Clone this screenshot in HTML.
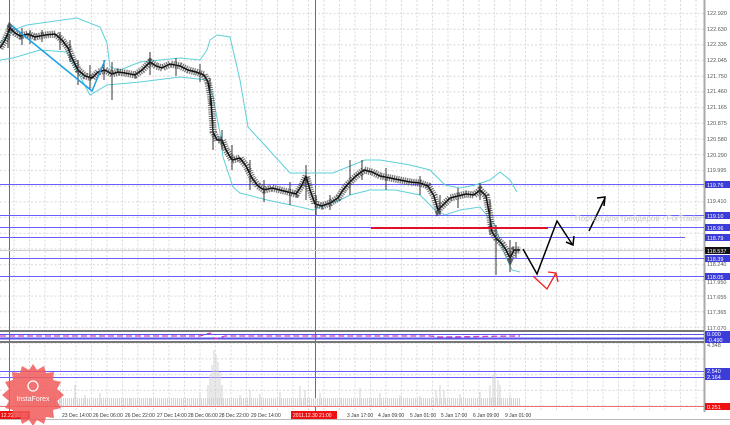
<!DOCTYPE html>
<html><head><meta charset="utf-8"><style>
html,body{margin:0;padding:0;background:#fff;width:730px;height:425px;overflow:hidden}
svg{display:block;font-family:"Liberation Sans",sans-serif}
</style></head><body>
<svg width="730" height="425" viewBox="0 0 730 425" xmlns="http://www.w3.org/2000/svg">
<defs>
<pattern id="g" x="0" y="0" width="15.5" height="15.7" patternUnits="userSpaceOnUse">
<path d="M0 13.5H15.5M14 0V15.7" stroke="#d8d8d8" stroke-width="1" stroke-dasharray="2,2" fill="none"/>
</pattern>
</defs>
<rect x="0" y="0" width="704" height="410" fill="url(#g)"/>
<line x1="704.5" y1="0" x2="704.5" y2="412" stroke="#aaa" stroke-width="2"/>
<g font-size="5.5" fill="#555">
<text x="707" y="15">122.920</text><text x="707" y="31">122.630</text><text x="707" y="46">122.335</text>
<text x="707" y="62">122.045</text><text x="707" y="78">121.750</text><text x="707" y="93">121.460</text>
<text x="707" y="109">121.165</text><text x="707" y="125">120.875</text><text x="707" y="141">120.580</text>
<text x="707" y="157">120.290</text><text x="707" y="172">119.995</text><text x="707" y="203">119.410</text>
<text x="707" y="266">118.240</text><text x="707" y="284">117.950</text><text x="707" y="299">117.655</text>
<text x="707" y="314">117.365</text><text x="707" y="330">117.070</text><text x="707" y="347">4.348</text>
</g>
<rect x="9" y="0" width="1" height="412" fill="#ff3030"/>
<rect x="315" y="0" width="1" height="412" fill="#ff3030"/>
<g stroke="#6a5cff" stroke-width="1">
<line x1="0" y1="184.5" x2="704" y2="184.5"/>
<line x1="0" y1="215.5" x2="704" y2="215.5"/>
<line x1="0" y1="227.5" x2="704" y2="227.5"/>
<line x1="0" y1="237.5" x2="685" y2="237.5"/>
<line x1="0" y1="258.5" x2="704" y2="258.5"/>
<line x1="0" y1="276.5" x2="704" y2="276.5"/>
<line x1="0" y1="371.5" x2="704" y2="371.5"/>
<line x1="0" y1="377.5" x2="704" y2="377.5"/>
</g>
<line x1="0" y1="250.5" x2="704" y2="250.5" stroke="#ccc"/>
<g fill="none" stroke="#5fd0d8" stroke-width="1">
<path d="M0 43 L13 30 L27 25 L77 18 L100 27 L107 43 L110 67 L120 70 L140 62 L160 60 L180 58 L200 60 L207 50 L210 40 L217 35 L230 37 L240 80 L248 127 L260 140 L290 173 L333 173 L365 160 L380 160 L410 165 L430 170 L445 185 L460 188 L475 185 L490 180 L500 172 L510 180 L517 192"/>
<path d="M0 60 L13 58 L40 50 L67 52 L90 95 L107 85 L140 82 L180 77 L207 80 L213 97 L220 133 L223 157 L233 187 L240 193 L267 200 L300 207 L313 210 L325 205 L340 200 L350 195 L370 190 L395 190 L420 195 L435 210 L445 215 L460 210 L480 207 L495 225 L505 255 L512 270 L520 272"/>
</g>
<path id="pr" d="M0 48 L5 40 L10 28 L15 33 L20 36 L28 34 L35 37 L45 35 L55 34 L62 40 L68 48 L72 58 L78 70 L85 76 L92 78 L98 72 L105 70 L112 74 L118 72 L125 73 L135 75 L142 70 L150 62 L156 66 L162 68 L170 64 L180 66 L188 70 L196 72 L204 75 L208 82 L211 100 L213 132 L217 140 L222 140 L226 150 L232 160 L240 158 L246 166 L252 178 L258 186 L264 190 L272 188 L280 190 L288 192 L296 194 L302 185 L306 176 L310 190 L315 204 L322 206 L330 203 L338 198 L343 190 L348 184 L356 176 L364 170 L372 172 L380 176 L390 178 L400 180 L410 182 L420 183 L428 186 L434 196 L438 210 L444 204 L450 198 L458 196 L466 194 L474 195 L480 190 L486 196 L489 212 L492 232 L496 238 L502 244 L506 250 L510 258 L514 250 L520 250" fill="none" stroke="#333" stroke-width="7" stroke-dasharray="1 1.2" opacity="0.55"/>
<use href="#pr" stroke-width="4" stroke-dasharray="1 0.8" opacity="0.8" transform="translate(0.5,0)"/>
<path d="M0 48 L5 40 L10 28 L15 33 L20 36 L28 34 L35 37 L45 35 L55 34 L62 40 L68 48 L72 58 L78 70 L85 76 L92 78 L98 72 L105 70 L112 74 L118 72 L125 73 L135 75 L142 70 L150 62 L156 66 L162 68 L170 64 L180 66 L188 70 L196 72 L204 75 L208 82 L211 100 L213 132 L217 140 L222 140 L226 150 L232 160 L240 158 L246 166 L252 178 L258 186 L264 190 L272 188 L280 190 L288 192 L296 194 L302 185 L306 176 L310 190 L315 204 L322 206 L330 203 L338 198 L343 190 L348 184 L356 176 L364 170 L372 172 L380 176 L390 178 L400 180 L410 182 L420 183 L428 186 L434 196 L438 210 L444 204 L450 198 L458 196 L466 194 L474 195 L480 190 L486 196 L489 212 L492 232 L496 238 L502 244 L506 250 L510 258 L514 250 L520 250" fill="none" stroke="#111" stroke-width="1.5"/>
<g stroke="#333" stroke-width="1">
<path d="M8 25V48M22 28V45M30 30V44M42 30V42M60 32V50M70 40V62M78 60V85M90 65V90M104 60V80M112 62V100M150 52V75M176 58V76M200 64V82M210 78V105M213 120V150M222 130V150M232 145V170M250 160V190M264 180V202M290 182V205M306 165V200M316 195V215M330 195V210M350 160V195M362 160V180M386 168V190M420 176V195M440 195V215M458 188V208M480 183V200M490 200V235M496 225V275M510 240V272M516 242V258"/>
</g>
<path d="M11 25 L92 91 L105 60" fill="none" stroke="#1ea0e6" stroke-width="1.5"/>
<line x1="371" y1="228" x2="548" y2="228" stroke="#e0102a" stroke-width="2"/>
<g fill="none" stroke="#000" stroke-width="1.5">
<path d="M523 249 L537 274 L557 221 L572 244"/>
<path d="M566 242 L573 245 L574 236"/>
<path d="M589 231 L605 198"/>
<path d="M597 198 L605 197 L604 206"/>
</g>
<path d="M533 276 L547 289 L556 273 M548 272 L556 273 L558 282" fill="none" stroke="#ee2222" stroke-width="1.3"/>
<text x="575" y="221" font-size="8" fill="#c8c8c8">Портал для трейдеров - ForTrader</text>
<g font-size="5.5" fill="#fff">
<rect x="705" y="181" width="25" height="7" fill="#3c3cd8"/><text x="707" y="187">119.76</text>
<rect x="705" y="212" width="25" height="7" fill="#3c3cd8"/><text x="707" y="218">119.10</text>
<rect x="705" y="224" width="25" height="7" fill="#3c3cd8"/><text x="707" y="230">118.96</text>
<rect x="705" y="234" width="25" height="7" fill="#3c3cd8"/><text x="707" y="240">118.79</text>
<rect x="705" y="247" width="25" height="7" fill="#111"/><text x="707" y="253">118.537</text>
<rect x="705" y="255" width="25" height="7" fill="#3c3cd8"/><text x="707" y="261">118.39</text>
<rect x="705" y="273" width="25" height="7" fill="#3c3cd8"/><text x="707" y="279">118.05</text>
<rect x="705" y="331" width="25" height="6" fill="#3c3cd8"/><text x="707" y="336">0.000</text>
<rect x="705" y="337" width="25" height="6" fill="#3c3cd8"/><text x="707" y="342">-0.490</text>
<rect x="705" y="368" width="25" height="6" fill="#3c3cd8"/><text x="707" y="373">2.540</text>
<rect x="705" y="374" width="25" height="6" fill="#3c3cd8"/><text x="707" y="379">2.164</text>
<rect x="705" y="403" width="25" height="7" fill="#ee1111"/><text x="707" y="409">0.251</text>
</g>
<rect x="0" y="330" width="704" height="2" fill="#777"/>
<rect x="0" y="341" width="704" height="2" fill="#777"/>
<line x1="0" y1="334.5" x2="704" y2="334.5" stroke="#5a50e8"/>
<line x1="0" y1="338.5" x2="704" y2="338.5" stroke="#5a50e8" stroke-width="2"/>
<path d="M0 336 L200 336 L210 333 L215 339 L225 336 L430 336 L440 337 L520 336" stroke="#d040c0" stroke-width="1.3" fill="none" stroke-dasharray="6,3"/>
<!-- volume -->
<line x1="15" y1="402" x2="520" y2="402" stroke="#d4d4d4" stroke-width="8" stroke-dasharray="1 1"/>
<g stroke="#d0d0d0" stroke-width="1">
<path d="M50 405V395M54 405V392M60 405V390M75 405V385M85 405V395M100 405V393M130 405V398M150 405V398M200 405V392M208 405V385M210 405V375M212 405V365M214 405V350M216 405V355M218 405V362M220 405V372M222 405V385M240 405V395M250 405V390M260 405V394M280 405V392M300 405V386M305 405V390M320 405V393M340 405V398M360 405V388M380 405V393M400 405V395M420 405V396M436 405V390M440 405V385M444 405V390M460 405V394M480 405V392M490 405V385M493 405V375M495 405V372M498 405V380M500 405V385M510 405V395"/>
</g>
<line x1="0" y1="406.5" x2="704" y2="406.5" stroke="#f07070"/>
<g font-size="5" fill="#333">
<text x="62" y="417">23 Dec 14:00</text><text x="93" y="417">26 Dec 06:00</text><text x="125" y="417">26 Dec 22:00</text>
<text x="157" y="417">27 Dec 14:00</text><text x="188" y="417">28 Dec 06:00</text><text x="219" y="417">28 Dec 22:00</text>
<text x="251" y="417">29 Dec 14:00</text><text x="347" y="417">3 Jan 17:00</text><text x="378" y="417">4 Jan 09:00</text>
<text x="410" y="417">5 Jan 01:00</text><text x="441" y="417">5 Jan 17:00</text><text x="473" y="417">6 Jan 09:00</text>
<text x="505" y="417">9 Jan 01:00</text>
</g>
<rect x="0" y="411" width="30" height="8" fill="#ee1111"/>
<text x="1" y="417" font-size="5" fill="#fff">12.22 11:00</text>
<rect x="291" y="411" width="46" height="8" fill="#ee1111"/>
<text x="293" y="417" font-size="5" fill="#fff">2011.12.30 21:00</text>
<line x1="0" y1="419.5" x2="730" y2="419.5" stroke="#bbb"/>
<g transform="translate(33,395)" opacity="0.85">
<path d="M0-31 L4-25 L11-29 L13-22 L21-23 L20-15 L28-13 L24-6 L31 0 L24 6 L28 13 L20 15 L21 23 L13 22 L11 29 L4 25 L0 31 L-4 25 L-11 29 L-13 22 L-21 23 L-20 15 L-28 13 L-24 6 L-31 0 L-24-6 L-28-13 L-20-15 L-21-23 L-13-22 L-11-29 L-4-25Z" fill="#f25a5a"/>
<circle cx="0" cy="-9" r="5" fill="none" stroke="#fff" stroke-width="1.3"/>
<text x="0" y="6" font-size="7" fill="#fff" text-anchor="middle">InstaForex</text>
</g>
</svg>
</body></html>
